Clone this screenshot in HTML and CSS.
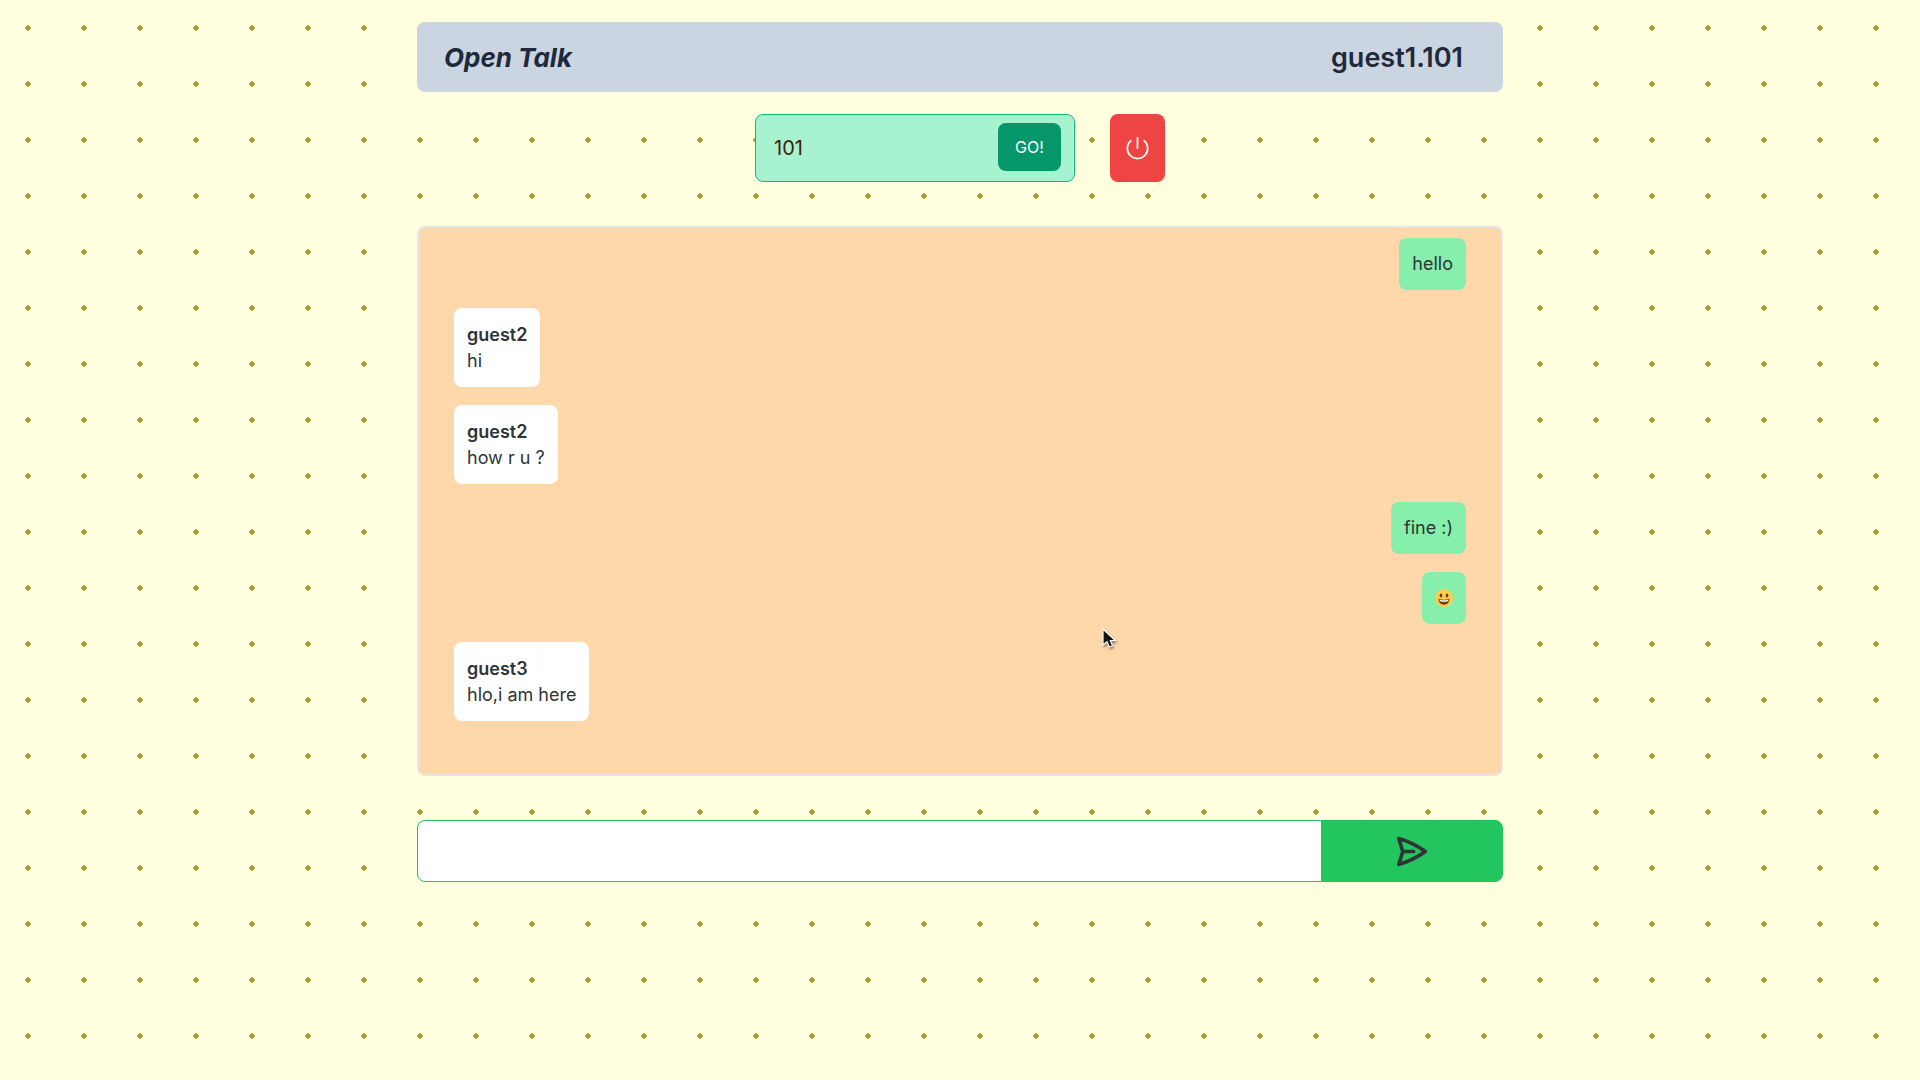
FILE: index.html
```html
<!DOCTYPE html>
<html lang="en">
<head>
<meta charset="utf-8">
<meta name="viewport" content="width=device-width, initial-scale=1">
<title>Open Talk</title>
<link rel="stylesheet" href="styles.css">
</head>
<body>
<main class="app">
  <header class="topbar">
    <h1 class="brand">Open Talk</h1>
    <p class="identity">guest1.101</p>
  </header>

  <div class="controls">
    <form class="room">
      <input class="room-input" type="text" value="101" aria-label="Room">
      <button class="room-go" type="button">GO!</button>
    </form>
    <button class="leave" type="button" aria-label="Leave room">
      <svg width="23" height="24" viewBox="0 0 23 24" fill="none" stroke="currentColor" stroke-width="1.700" aria-hidden="true">
        <path d="M11.500 1v12"/>
        <path d="M5.300 4.300a10.200 10.200 0 1 0 12.400 0"/>
      </svg>
    </button>
  </div>

  <section class="chat" aria-label="Messages">
    <div class="message mine">hello</div>
    <div class="message"><strong class="author">guest2</strong>hi</div>
    <div class="message"><strong class="author">guest2</strong>how r u ?</div>
    <div class="message mine">fine :)</div>
    <div class="message mine">
      <svg class="emoji" width="18" height="26" viewBox="0 0 18 26" role="img" aria-label="Grinning face">
        <circle cx="9" cy="13" r="9" fill="#ffcc4d"/>
        <ellipse cx="6" cy="10.500" rx="1.300" ry="1.900" fill="#664500"/>
        <ellipse cx="12" cy="10.500" rx="1.300" ry="1.900" fill="#664500"/>
        <path d="M3.500 14q5.500 1.500 11 0c0 3.500-2.300 5.700-5.500 5.700s-5.500-2.200-5.500-5.700z" fill="#664500"/>
        <path d="M4.500 14.700q4.500 1.100 9 0c0 1.500-1 2-4.500 2s-4.500-.500-4.500-2z" fill="#fff"/>
      </svg>
    </div>
    <div class="message"><strong class="author">guest3</strong>hlo,i am here</div>
    <svg class="pointer" width="16" height="24" viewBox="0 0 16 24" aria-hidden="true">
      <path d="M1 1v16l4-3.300 2.300 5.300 3.200-1.300-2.200-5.200h5z" fill="#111" stroke="#fff" stroke-width="1.200"/>
    </svg>
  </section>

  <form class="composer">
    <input class="composer-input" type="text" aria-label="Message">
    <button class="send" type="button" aria-label="Send">
      <svg width="35" height="35" viewBox="0 0 24 24" fill="none" stroke="currentColor" stroke-width="2.500" stroke-linecap="round" stroke-linejoin="round" aria-hidden="true">
        <path d="M6 12 3.269 3.125A59.769 59.769 0 0 1 21.485 12 59.768 59.768 0 0 1 3.270 20.875L5.999 12Zm0 0h7.500"/>
      </svg>
    </button>
  </form>
</main>
</body>
</html>
```
FILE: styles.css
```css
* {
  box-sizing: border-box;
}

body {
  margin: 0;
  min-height: 100vh;
  background-color: #ffffdf;
  background-image: radial-gradient(#a3a33f 7%, transparent 7%);
  background-size: 56px 56px;
  color: #2f3437;
  font-family: Inter, "Noto Sans", sans-serif;
  font-size: 18px;
  line-height: 26px;
}

input,
button {
  margin: 0;
  border: 0;
  font: inherit;
}

button {
  padding: 0;
  cursor: pointer;
}

svg {
  display: block;
}

.app {
  display: flex;
  flex-direction: column;
  max-width: 1086px;
  margin: 0 auto;
  padding: 22px 0;
}

.topbar {
  display: flex;
  align-items: center;
  justify-content: space-between;
  padding: 18px 40px 16px 27px;
  border-radius: 8px;
  background: #cbd5e1;
  color: #1e293b;
  font-size: 27px;
  line-height: 36px;
}

.brand,
.identity {
  margin: 0;
}

.brand {
  font-size: 26px;
  font-weight: 700;
  font-style: italic;
}

.identity {
  font-weight: 600;
}

.controls {
  display: flex;
  justify-content: center;
  gap: 35px;
  margin: 22px 0 44px;
}

.room {
  display: flex;
  align-items: center;
  width: 320px;
  height: 68px;
  padding: 0 13px 0 18px;
  border: 1px solid #10b981;
  border-radius: 8px;
  background: #a7f3d0;
}

.room-input {
  flex: 1;
  min-width: 0;
  padding: 0;
  background: transparent;
  color: #422006;
  font-size: 20px;
}

.room-go {
  width: 63px;
  height: 48px;
  margin-bottom: 2px;
  border-radius: 8px;
  background: #059669;
  color: #fff;
  font-size: 16px;
}

.leave {
  display: grid;
  place-items: center;
  width: 55px;
  border-radius: 8px;
  background: #ef4444;
  color: #fff;
}

.chat {
  position: relative;
  display: flex;
  flex-direction: column;
  align-items: flex-start;
  gap: 18px;
  min-height: 550px;
  padding: 10px 35px;
  border: 2px solid #e5e5e5;
  border-radius: 8px;
  background: #fed7aa;
}

.message {
  padding: 13px;
  border-radius: 8px;
  background: #fff;
}

.mine {
  align-self: flex-end;
  background: #86efac;
}

.author {
  display: block;
  font-weight: 600;
  line-height: 27px;
}

.pointer {
  position: absolute;
  top: 400px;
  left: 683px;
  filter: drop-shadow(1px 2px 1px rgb(0 0 0 / 40%));
}

.composer {
  display: grid;
  grid-template-columns: 5fr 1fr;
  height: 62px;
  margin-top: 44px;
  overflow: hidden;
  border: 1px solid #22c55e;
  border-radius: 8px;
  background: #22c55e;
}

.composer-input {
  min-width: 0;
  padding: 0 18px;
  background: #fff;
}

.send {
  display: grid;
  place-items: center;
  background: #22c55e;
  color: #2f3437;
}
```
